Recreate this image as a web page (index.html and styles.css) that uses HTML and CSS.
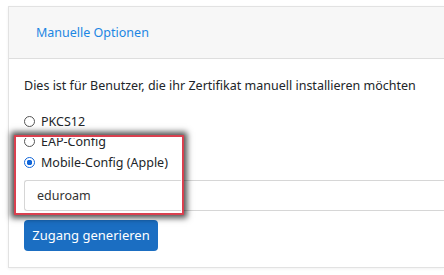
FILE: index.html
```html
<!DOCTYPE html>
<html lang="de">
<head>
    <meta charset="UTF-8">
    <meta name="viewport" content="width=device-width, initial-scale=1.0">
    <title>Manuelle Optionen</title>
    <link rel="stylesheet" href="styles.css">
</head>
<body>
    <div class="card">
        <div class="card-header">
            <a class="tab-link" href="#">Manuelle Optionen</a>
        </div>
        <div class="card-body">
            <p class="intro">Dies ist für Benutzer, die ihr Zertifikat manuell installieren möchten</p>
            <div class="options">
                <label class="option"><span class="radio"></span>PKCS12</label>
                <label class="option"><span class="radio"></span>EAP-Config</label>
                <label class="option"><span class="radio checked"></span>Mobile-Config (Apple)</label>
            </div>
            <div class="field">eduroam</div>
            <button class="btn-primary">Zugang generieren</button>
        </div>
    </div>
    <div class="highlight"></div>
</body>
</html>
```

FILE: styles.css
```css
body {
    margin: 0;
    padding: 6px 0 0 8px;
    background-color: #fff;
    font-family: 'Noto Sans', 'Open Sans', sans-serif;
    color: #212529;
    overflow: hidden;
    position: relative;
    height: 275px;
    box-sizing: border-box;
}

.card {
    background-color: #fff;
    border: 1px solid #e2e2e2;
    border-right: none;
    box-shadow: 0 1px 3px rgba(0, 0, 0, 0.06);
}

.card-header {
    height: 51px;
    display: flex;
    align-items: center;
    padding-left: 27px;
    background-color: #f7f7f7;
    border-bottom: 1px solid #dedede;
}

.tab-link {
    font-size: 12.5px;
    color: #1c86e3;
    text-decoration: none;
}

.card-body {
    padding: 17px 0 16px 15px;
}

.intro {
    margin: 0;
    font-size: 12.5px;
    line-height: 20px;
}

.options {
    margin-top: 15px;
    display: flex;
    flex-direction: column;
}

.option {
    display: flex;
    align-items: center;
    height: 20.5px;
    font-size: 12.5px;
}

.radio {
    width: 11px;
    height: 11px;
    box-sizing: border-box;
    border: 1px solid #555;
    border-radius: 50%;
    margin-right: 6px;
}

.radio.checked {
    border: 1.5px solid #1166d9;
    background: radial-gradient(circle, #1166d9 0 2.6px, #fff 3px);
}

.field {
    margin-top: 7px;
    height: 31px;
    box-sizing: border-box;
    border: 1px solid #d6d6d6;
    border-right: none;
    border-radius: 3px 0 0 3px;
    display: flex;
    align-items: center;
    padding-left: 12px;
    font-size: 12.5px;
    color: #333;
}

.btn-primary {
    margin-top: 9px;
    width: 134px;
    height: 31px;
    border: none;
    border-radius: 4px;
    background-color: #1b6ec2;
    color: #fff;
    font-family: inherit;
    font-size: 13px;
    padding: 0;
}

.highlight {
    position: absolute;
    left: 14px;
    top: 135px;
    width: 170px;
    height: 80px;
    box-sizing: border-box;
    border: 2px solid #d9404f;
    box-shadow: inset 0 0 0 1px #fff, 0 0 6px 3px rgba(0, 0, 0, 0.7);
}
```
